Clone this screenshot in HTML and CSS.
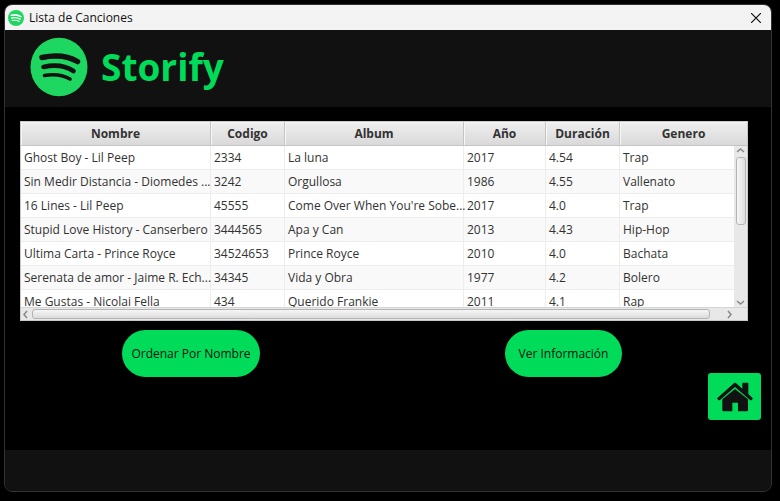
FILE: index.html
```html
<!DOCTYPE html>
<html lang="es">
<head>
<meta charset="utf-8">
<title>Lista de Canciones</title>
<link rel="stylesheet" href="styles.css">
</head>
<body>
<div class="window">
  <div class="titlebar">
    <svg class="app-icon" viewBox="0 0 58 60" preserveAspectRatio="none" aria-hidden="true">
      <ellipse cx="29" cy="30" rx="29" ry="30" fill="#1ed760"/>
      <g fill="none" stroke="#fff" stroke-linecap="round">
        <path d="M12 20Q31 15 47 25" stroke-width="6"/>
        <path d="M13 30Q30 26 44 34" stroke-width="5"/>
        <path d="M15 39Q29 36 41 43" stroke-width="4"/>
      </g>
    </svg>
    <span class="window-title">Lista de Canciones</span>
    <button class="close" type="button" aria-label="Cerrar">
      <svg width="10" height="10" viewBox="0 0 10 10"><path d="M0 0L10 10M10 0L0 10" stroke="#111" stroke-width="1.2"/></svg>
    </button>
  </div>
  <header class="brand">
    <svg class="logo" viewBox="0 0 58 60" aria-hidden="true">
      <ellipse cx="29" cy="30" rx="28.500" ry="29.300" fill="#1ed760"/>
      <g fill="none" stroke="#111" stroke-linecap="round" stroke-linejoin="round">
        <path d="M12 20.500Q33 16 47.500 24.500" stroke-width="5.500"/>
        <path d="M13.500 30Q31 26 43.500 34" stroke-width="4.600"/>
        <path d="M14.500 38.500Q29 36 40 42" stroke-width="3.700"/>
      </g>
    </svg>
    <h1 class="brand-name">Storify</h1>
  </header>
  <main class="content">
    <div class="song-list">
      <div class="viewport">
        <table class="songs">
          <colgroup><col class="c-name"><col class="c-code"><col class="c-album"><col class="c-year"><col class="c-length"><col></colgroup>
          <thead>
            <tr><th>Nombre</th><th>Codigo</th><th>Album</th><th>Año</th><th>Duración</th><th>Genero</th></tr>
          </thead>
          <tbody>
            <tr><td>Ghost Boy - Lil Peep</td><td>2334</td><td>La luna</td><td>2017</td><td>4.54</td><td>Trap</td></tr>
            <tr><td>Sin Medir Distancia - Diomedes ...</td><td>3242</td><td>Orgullosa</td><td>1986</td><td>4.55</td><td>Vallenato</td></tr>
            <tr><td>16 Lines - Lil Peep</td><td>45555</td><td>Come Over When You're Sobe...</td><td>2017</td><td>4.0</td><td>Trap</td></tr>
            <tr><td>Stupid Love History - Canserbero</td><td>3444565</td><td>Apa y Can</td><td>2013</td><td>4.43</td><td>Hip-Hop</td></tr>
            <tr><td>Ultima Carta - Prince Royce</td><td>34524653</td><td>Prince Royce</td><td>2010</td><td>4.0</td><td>Bachata</td></tr>
            <tr><td>Serenata de amor - Jaime R. Ech...</td><td>34345</td><td>Vida y Obra</td><td>1977</td><td>4.2</td><td>Bolero</td></tr>
            <tr><td>Me Gustas - Nicolai Fella</td><td>434</td><td>Querido Frankie</td><td>2011</td><td>4.1</td><td>Rap</td></tr>
          </tbody>
        </table>
      </div>
      <div class="scroll vertical" aria-hidden="true">
        <svg class="arrow" viewBox="0 0 9 9"><path d="M1 6L4.500 3L8 6"/></svg>
        <div class="track"><div class="thumb"></div></div>
        <svg class="arrow" viewBox="0 0 9 9"><path d="M1 3L4.500 6L8 3"/></svg>
      </div>
      <div class="scroll horizontal" aria-hidden="true">
        <svg class="arrow" viewBox="0 0 9 9"><path d="M6 1L3 4.500L6 8"/></svg>
        <div class="track"><div class="thumb"></div></div>
        <svg class="arrow" viewBox="0 0 9 9"><path d="M3 1L6 4.500L3 8"/></svg>
      </div>
    </div>
    <div class="actions">
      <button class="pill sort" type="button">Ordenar Por Nombre</button>
      <button class="pill info" type="button">Ver Información</button>
    </div>
    <button class="home" type="button" aria-label="Inicio">
      <svg width="36" height="30" viewBox="0 0 108 88" fill="#111">
        <path d="M76 3Q76 1 78 1H92Q94 1 94 3V35L106 46Q109 49 106 51L104 53Q101 55 99 53L54 14L9 53Q7 55 4 53L2 51Q-1 48 2 46L49 4Q54-1 59 4L76 19Z"/>
        <path d="M16 51L54 20L93 51V84Q93 87 90 87H63V61H46V87H19Q16 87 16 84Z"/>
      </svg>
    </button>
  </main>
  <footer class="bottom-bar"></footer>
</div>
</body>
</html>
```
FILE: styles.css
```css
* { box-sizing: border-box; }

body {
  margin: 0;
  padding: 4px 8px 9px 4px;
  min-height: 100vh;
  display: flex;
  background: #000;
  font: 12px/16px "Open Sans", "Noto Sans", sans-serif;
  color: #323232;
}

button { font: inherit; border: 0; padding: 0; cursor: pointer; }

.window {
  flex: 1;
  min-width: 0;
  display: flex;
  flex-direction: column;
  border: 1px solid #333;
  border-radius: 8px;
  overflow: hidden;
}

.titlebar {
  display: flex;
  align-items: center;
  height: 25px;
  padding: 0 10px 0 3px;
  background: #f3f3f3;
  color: #111;
}
.app-icon { width: 16px; height: 16px; }
.window-title { margin-left: 5px; }
.close { display: flex; margin-left: auto; background: none; }

.brand {
  display: flex;
  align-items: center;
  gap: 13px;
  height: 77px;
  padding: 0 25px 3px;
  background: #111;
}
.logo { width: 58px; height: 60px; }
.brand-name {
  margin: 0;
  font-size: 37px;
  line-height: 48px;
  font-weight: 700;
  color: #00dc5a;
}

.content {
  flex: 1;
  display: flex;
  flex-direction: column;
  padding: 14px 23px 30px 15px;
}

.song-list {
  display: grid;
  grid-template-columns: minmax(0, 1fr) 13px;
  grid-template-rows: 24px 161px 13px;
  border: 1px solid #c8c8c8;
  background: #fff;
}
.viewport { grid-area: 1 / 1 / 3 / 3; overflow: hidden; }

.songs {
  width: 100%;
  table-layout: fixed;
  border-collapse: separate;
  border-spacing: 0;
}
.c-name { width: 190px; }
.c-code, .c-length { width: 74px; }
.c-album { width: 179px; }
.c-year { width: 82px; }
.songs th {
  height: 24px;
  padding: 0;
  border-right: 1px solid #c4c4c4;
  border-bottom: 1px solid #c4c4c4;
  background: linear-gradient(#efefef, #d9d9d9);
  box-shadow: inset 1px 1px #f7f7f7;
  font-weight: 700;
}
.songs td {
  height: 24px;
  padding: 0 0 0 3px;
  border-right: 1px solid #ededed;
  border-bottom: 1px solid #ededed;
  white-space: nowrap;
}
.songs th:last-child { border-right: 0; }
.songs tbody tr:nth-child(even) { background: #f9f9f9; }

.scroll { display: flex; align-items: center; background: #e8e8e8; }
.vertical { grid-area: 2 / 2; flex-direction: column; }
.horizontal { grid-area: 3 / 1 / 4 / 3; padding-right: 13px; border-top: 1px solid #d4d4d4; }
.arrow { flex: none; width: 9px; height: 9px; fill: none; stroke: #888; stroke-width: 1.5; }
.track { flex: 1; align-self: stretch; display: flex; }
.thumb { border: 1px solid #b4b4b4; border-radius: 3px; }
.vertical .track { justify-content: center; padding-top: 2px; }
.vertical .thumb { width: 10px; height: 68px; background: linear-gradient(90deg, #f6f6f6, #dcdcdc); }
.horizontal .track { padding: 1px 15px 1px 2px; }
.horizontal .thumb { width: 100%; background: linear-gradient(#f6f6f6, #dcdcdc); }

.actions {
  display: flex;
  justify-content: space-between;
  align-items: flex-start;
  padding: 9px 126px 0 102px;
}
.pill { height: 47px; border-radius: 24px; background: #00dc5a; color: #111; }
.sort { width: 138px; }
.info { width: 117px; }

.home {
  display: flex;
  align-items: center;
  justify-content: center;
  align-self: flex-end;
  width: 53px;
  height: 47px;
  margin: -4px -13px 0 0;
  border-radius: 3px;
  background: #00dc5a;
}

.bottom-bar { height: 41px; background: #111; }
```
